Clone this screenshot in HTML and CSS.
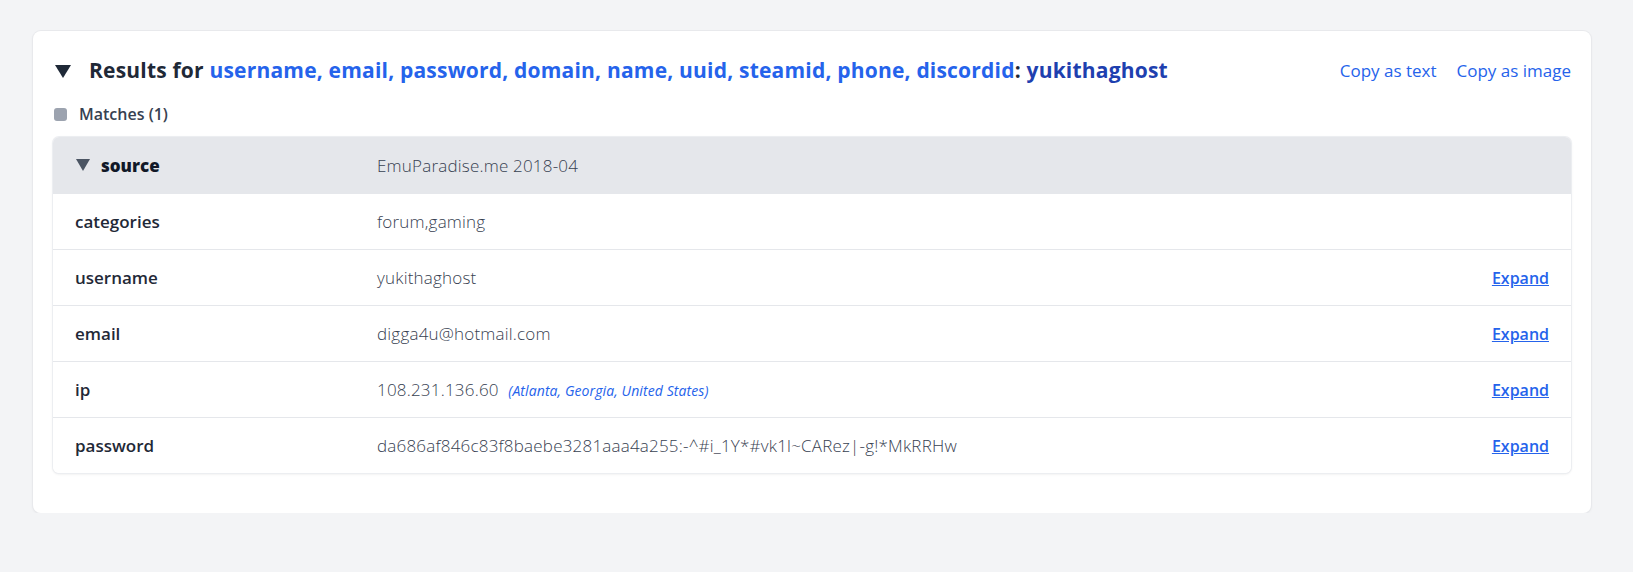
FILE: index.html
```html
<!DOCTYPE html>
<html>
<head>
<meta charset="utf-8">
<link rel="stylesheet" href="styles.css">
</head>
<body>
<div class="page">
  <div class="card">
    <div class="head">
      <div class="title">
        <span class="tri"></span>
        <span class="title-text">Results for <span class="fields">username, email, password, domain, name, uuid, steamid, phone, discordid</span>: <span class="query">yukithaghost</span></span>
      </div>
      <div class="actions">
        <a class="action">Copy as text</a>
        <a class="action">Copy as image</a>
      </div>
    </div>
    <div class="matches"><span class="box"></span><span>Matches (1)</span></div>
    <div class="table">
      <div class="row row-head">
        <div class="key key-head"><span class="tri-sm"></span>source</div>
        <div class="val">EmuParadise.me 2018-04</div>
      </div>
      <div class="row">
        <div class="key">categories</div>
        <div class="val">forum,gaming</div>
      </div>
      <div class="row">
        <div class="key">username</div>
        <div class="val">yukithaghost</div>
        <a class="expand">Expand</a>
      </div>
      <div class="row">
        <div class="key">email</div>
        <div class="val">digga4u@hotmail.com</div>
        <a class="expand">Expand</a>
      </div>
      <div class="row">
        <div class="key">ip</div>
        <div class="val">108.231.136.60 <span class="loc">(Atlanta, Georgia, United States)</span></div>
        <a class="expand">Expand</a>
      </div>
      <div class="row">
        <div class="key">password</div>
        <div class="val">da686af846c83f8baebe3281aaa4a255:-^#i_1Y*#vk1l~CARez|-g!*MkRRHw</div>
        <a class="expand">Expand</a>
      </div>
    </div>
  </div>
</div>
</body>
</html>
```

FILE: styles.css
```css
html, body {
  margin: 0;
  padding: 0;
  background: #f3f4f6;
  font-family: "Open Sans", "Noto Sans", sans-serif;
}
.page {
  padding: 31px 42px 0 33px;
}
.card {
  background: #ffffff;
  border-radius: 8px;
  box-shadow: 0 0 0 1px #e8e9ec, 0 1px 3px rgba(0,0,0,0.08);
  padding: 23px 20px 40px 20px;
}
.head {
  display: flex;
  justify-content: space-between;
  align-items: center;
  height: 32px;
}
.title {
  display: flex;
  align-items: center;
  padding-left: 2px;
}
.tri {
  width: 0;
  height: 0;
  border-left: 8.5px solid transparent;
  border-right: 8.5px solid transparent;
  border-top: 13px solid #1f2937;
  margin-right: 18px;
  margin-top: 2px;
}
.title-text {
  font-size: 21px;
  font-weight: 700;
  color: #1f2937;
  letter-spacing: 0.2px;
  line-height: 32px;
}
.fields {
  color: #2563eb;
}
.query {
  color: #1e40af;
}
.actions {
  display: flex;
  gap: 20px;
}
.action {
  color: #2563eb;
  font-size: 17px;
  font-weight: 400;
}
.matches {
  display: flex;
  align-items: center;
  margin-top: 16px;
  height: 24px;
  font-size: 16px;
  font-weight: 600;
  color: #374151;
  padding-left: 1px;
}
.box {
  width: 13px;
  height: 13px;
  border-radius: 3px;
  background: #9ca3af;
  margin-right: 12px;
}
.table {
  margin-top: 11px;
  border-radius: 6px;
  box-shadow: 0 0 0 1px #eceef1, 0 1px 3px rgba(0,0,0,0.10);
  overflow: hidden;
}
.row {
  display: flex;
  align-items: center;
  height: 55px;
  border-top: 1px solid #e5e7eb;
  padding: 0 22px;
  background: #ffffff;
}
.row-head {
  border-top: none;
  height: 56px;
  background: #e5e7eb;
}
.key {
  width: 302px;
  flex: none;
  font-size: 17px;
  font-weight: 600;
  color: #1f2937;
}
.key-head {
  display: flex;
  align-items: center;
  font-weight: 800;
  color: #111827;
}
.tri-sm {
  width: 0;
  height: 0;
  border-left: 7px solid transparent;
  border-right: 7px solid transparent;
  border-top: 12px solid #4b5563;
  margin-left: 1px;
  margin-right: 11px;
}
.val {
  flex: 1;
  font-size: 17px;
  font-weight: 300;
  color: #374151;
  letter-spacing: 0.2px;
}
.loc {
  font-size: 14px;
  font-style: italic;
  color: #2563eb;
  font-weight: 400;
  margin-left: 5px;
  letter-spacing: 0.1px;
}
.expand {
  color: #2563eb;
  font-size: 16px;
  font-weight: 600;
  text-decoration: underline;
}
```
